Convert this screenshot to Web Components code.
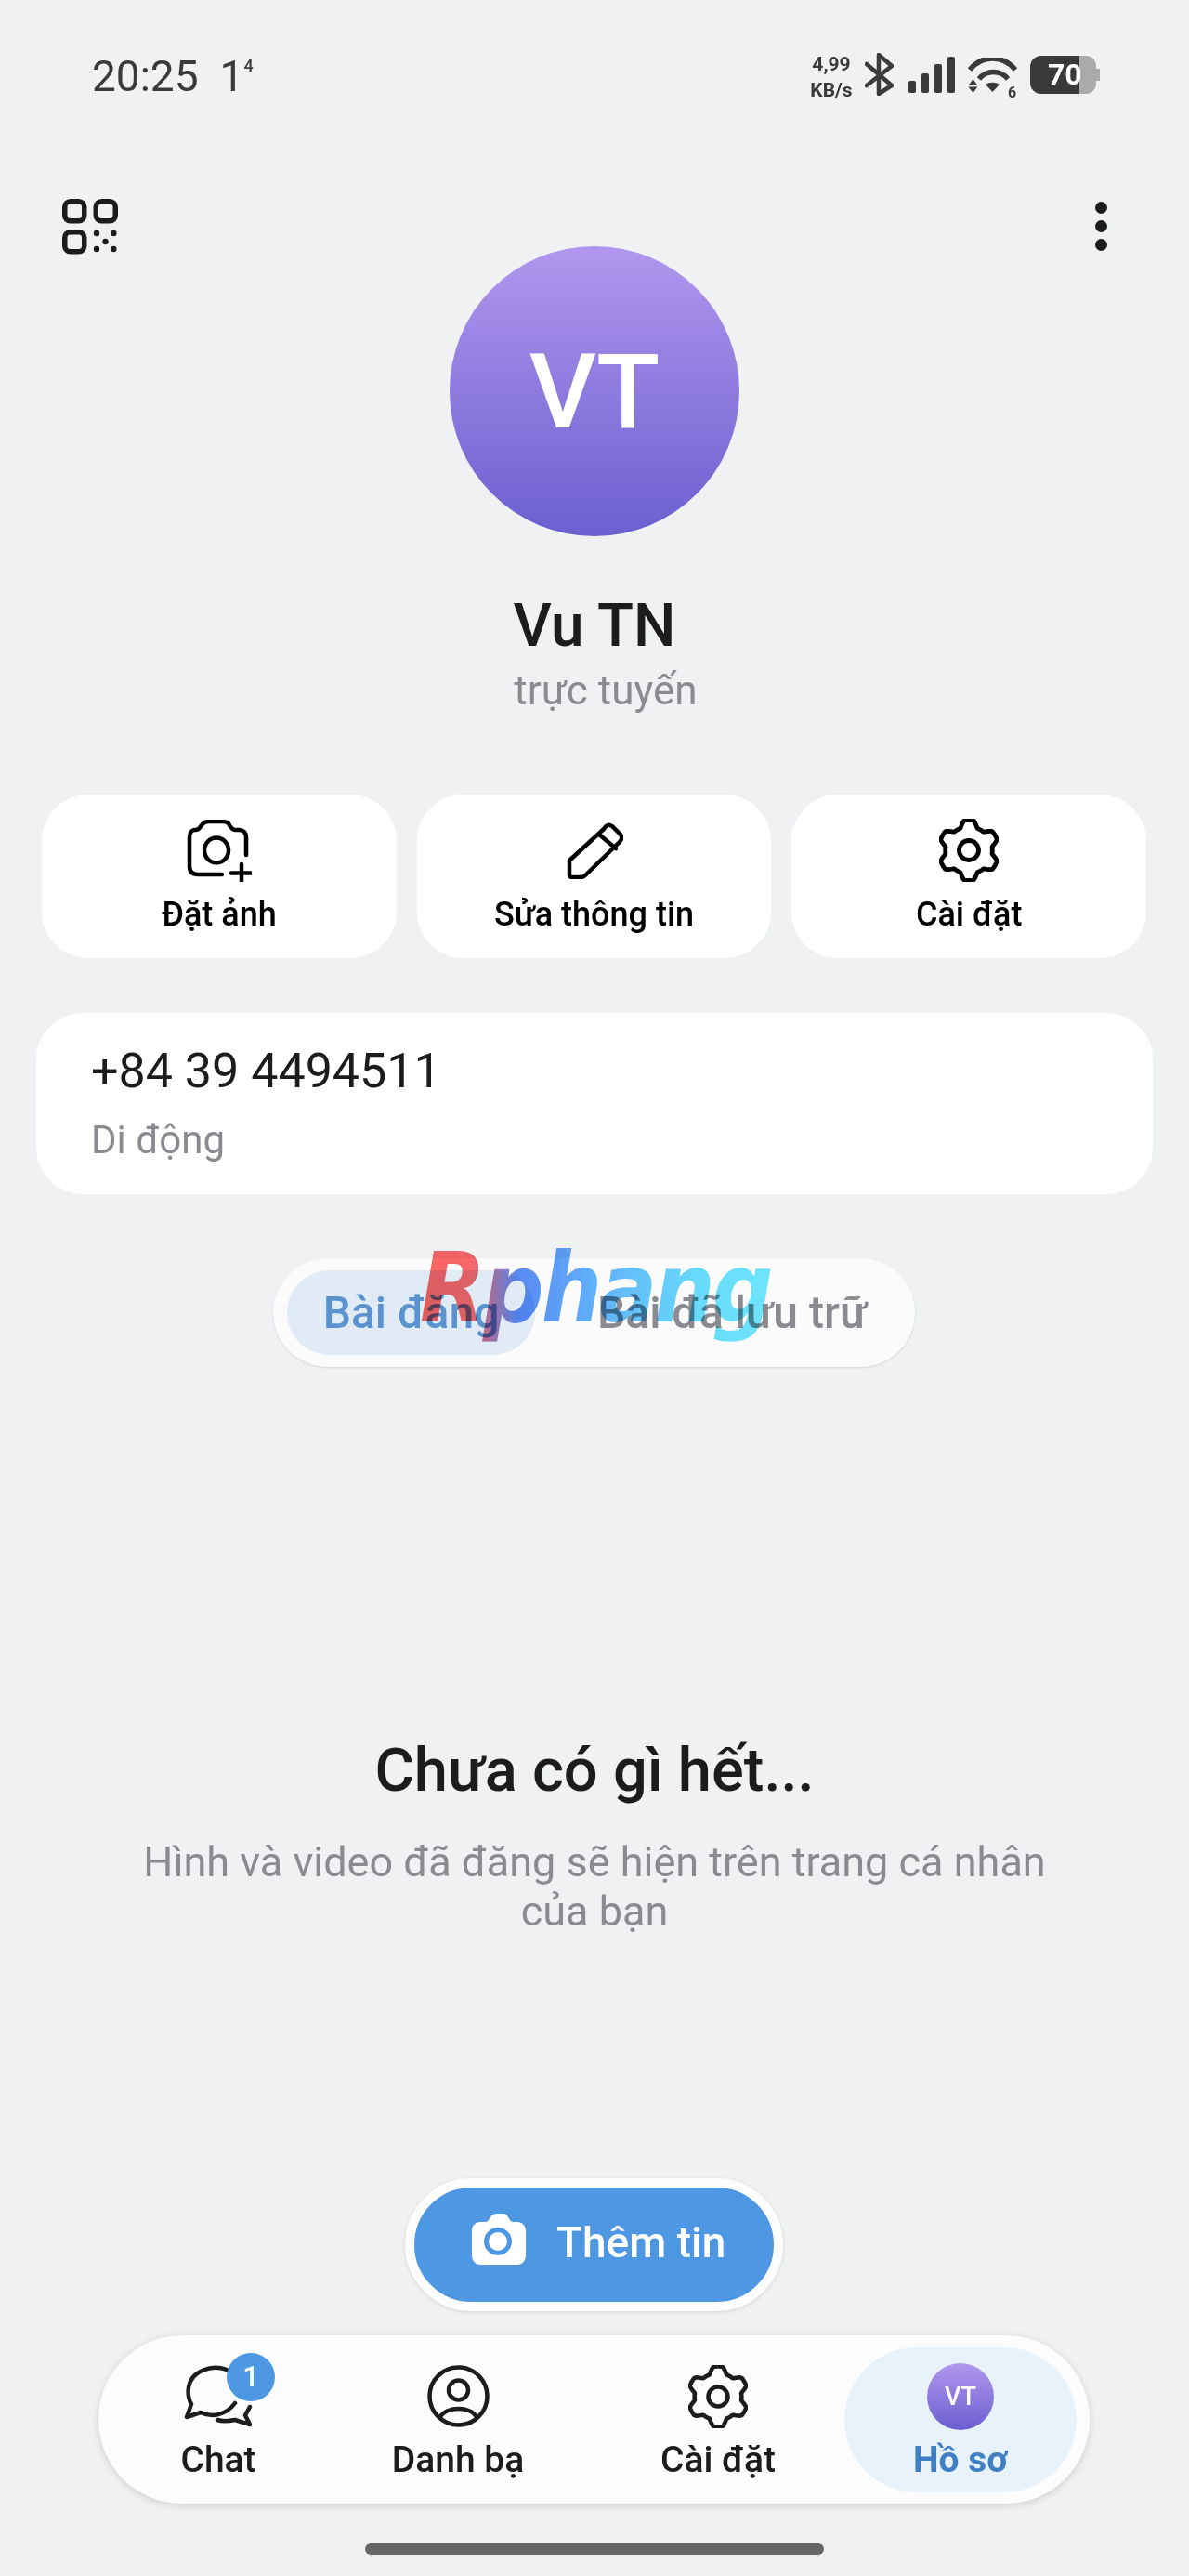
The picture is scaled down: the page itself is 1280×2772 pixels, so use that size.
<!DOCTYPE html>
<html lang="vi"><head><meta charset="utf-8"><title>Hồ sơ</title>
<style>
html,body{margin:0;padding:0;background:#f0f1f3}
body{font-family:Roboto,"Noto Sans",sans-serif;color:#1c1c1e}
</style></head><body>
<profile-screen>
  <status-bar></status-bar>
  <profile-head name="Vu TN" state="trực tuyến" initials="VT"></profile-head>
  <action-row></action-row>
  <phone-card number="+84 39 4494511" kind="Di động"></phone-card>
  <post-tabs></post-tabs>
  <empty-state></empty-state>
  <story-button></story-button>
  <bottom-nav></bottom-nav>
  <home-bar></home-bar>
</profile-screen>
<script>
const el=(name,html)=>customElements.define(name,class extends HTMLElement{
  constructor(){super();this.attachShadow({mode:'open'}).innerHTML=typeof html==='function'?html(this):html}
  connectedCallback(){if(typeof html==='function')this.shadowRoot.innerHTML=html(this)}
});
function gearPath(cx,cy,R,a){
  let d='';const n=180;
  for(let i=0;i<n;i++){const t=i/n*2*Math.PI;
    const c=Math.cos(6*(t-Math.PI/2));
    const s=Math.max(-1,Math.min(1,1.7*c));
    const r=R-a+a*s;
    d+=(i?'L':'M')+(cx+r*Math.cos(t)).toFixed(2)+' '+(cy+r*Math.sin(t)).toFixed(2);
  }
  return d+'Z';
}
const gear=(size,h,sw)=>`<svg width="${size}" height="${h}" viewBox="0 0 64 68" fill="none" stroke="currentColor" stroke-width="${sw}" stroke-linejoin="round"><path d="${gearPath(32,34,32.5,3.6)}"/><circle cx="32" cy="34" r="10.5"/></svg>`;

el('profile-screen',`<style>:host{display:flex;flex-direction:column;width:1280px;height:2772px;overflow:hidden;background:#f0f1f3}::slotted(*){flex:none}</style><slot></slot>`);

el('status-bar',`<style>
:host{display:flex;justify-content:space-between;align-items:flex-start;height:214px;padding:0 96px 0 99px;box-sizing:border-box;color:#3a3a3a}
.l{display:flex;align-items:flex-start;margin-top:60px;font-size:46px;line-height:45px;letter-spacing:0}
.one{margin-left:23px}.sup{font-size:18px;line-height:18px;margin-top:2px;font-weight:500}
.r{display:flex;align-items:flex-start;margin-top:57px;position:relative}
.net{font-size:21px;line-height:28px;font-weight:700;text-align:center;width:46px;margin-right:13px;margin-top:-2px;margin-left:-2px}
svg{display:block}
.bat{position:relative;width:75px;height:41px;margin:3px 0 0 14px}
.bat b{position:absolute;left:19px;top:2px;font-size:32px;line-height:37px;color:#fff;font-weight:700}
.wifi{position:relative;margin:5px 0 0 14px}
.wifi i{position:absolute;left:43px;top:30px;font:700 16px/16px Roboto;color:#3a3a3a}
</style>
<div class="l"><span>20:25</span><span class="one">1</span><span class="sup">4</span></div>
<div class="r">
<div class="net">4,99<br>KB/s</div>
<svg width="31" height="46" viewBox="0 0 31 46" fill="none" stroke="#3a3a3a" stroke-width="4.5" stroke-linecap="round" stroke-linejoin="round"><path d="M2 12 29 35 15 44V2L29 14 2 35"/></svg>
<svg style="margin:4px 0 0 16px" width="50" height="39" viewBox="0 0 50 39" fill="#3a3a3a"><rect x="0" y="26" width="8" height="13" rx="2"/><rect x="14" y="18" width="8" height="21" rx="2"/><rect x="28" y="8" width="8" height="31" rx="2"/><rect x="42" y="0" width="8" height="39" rx="2"/></svg>
<div class="wifi"><svg width="53" height="40" viewBox="0 0 53 40" fill="#3a3a3a"><path d="M2 13C15 -3 38 -3 51 13" fill="none" stroke="#3a3a3a" stroke-width="5.500"/><path d="M12 23C20 13 35 13 43 23" fill="none" stroke="#3a3a3a" stroke-width="5.500"/><path d="M19 29C23 26 30 26 34 29L26.500 37Z"/><path d="M5.500 23 10.500 30H.5ZM5.500 38 .5 31.500H10.500Z"/></svg><i>6</i></div>
<div class="bat"><svg width="75" height="41" viewBox="0 0 75 41"><path d="M12 0H60A11 11 0 0 1 71 11V14H75V27H71V30A11 11 0 0 1 60 41H12A12 12 0 0 1 0 29V12A12 12 0 0 1 12 0Z" fill="#aaaaaa"/><path d="M12 0H53V41H12A12 12 0 0 1 0 29V12A12 12 0 0 1 12 0Z" fill="#3a3a3a"/></svg><b>70</b></div>
</div>`);

el('profile-head',h=>`<style>
:host{display:block}
.top{display:grid;grid-template-columns:1fr 312px 1fr;padding:0 67px;align-items:start}
.av{margin:51px 0 0;width:312px;height:312px;border-radius:50%;background:linear-gradient(#b197ee,#6c5fd0);color:#fff;display:flex;align-items:center;justify-content:center;font-size:112px;font-weight:500;justify-self:center}
.dots{justify-self:end;display:flex;flex-direction:column;gap:7px;margin:3px 21px 0 0}
.dots i{width:13px;height:13px;border-radius:50%;background:#1c1c1e;display:block}
.n{text-align:center;font-size:64px;line-height:76px;font-weight:500;margin-top:59px;color:#1c1c1e}
.s{text-align:center;font-size:44px;line-height:50px;color:#8a8b90;margin-top:6px;padding-left:24px}
svg{display:block}
</style>
<div class="top">
<svg width="60" height="60" viewBox="0 0 60 60" fill="none" stroke="#1c1c1e" stroke-width="5.500"><rect x="2.750" y="2.750" width="21" height="21" rx="6"/><rect x="36.250" y="2.750" width="21" height="21" rx="6"/><rect x="2.750" y="35.750" width="21" height="21" rx="6"/><g fill="#1c1c1e" stroke="none"><circle cx="37" cy="37" r="3.200"/><circle cx="55.400" cy="37" r="3.200"/><circle cx="46.500" cy="46" r="3.200"/><circle cx="37" cy="54" r="3.200"/><circle cx="55.400" cy="54" r="3.200"/></g></svg>
<div class="av">${h.getAttribute('initials')||''}</div>
<div class="dots"><i></i><i></i><i></i></div>
</div>
<div class="n">${h.getAttribute('name')||''}</div>
<div class="s">${h.getAttribute('state')||''}</div>`);

el('action-tile',h=>`<style>
:host{display:flex;flex-direction:column;align-items:center;width:382px;height:176px;background:#fff;border-radius:50px;box-sizing:border-box;padding-top:24px;color:#000}
.i{height:72px;display:flex;align-items:center;justify-content:center}
.t{font-size:36px;line-height:42px;font-weight:500;margin-top:12px}
</style><div class="i"><slot></slot></div><div class="t">${h.getAttribute('label')||''}</div>`);

el('action-row',`<style>:host{display:flex;gap:22px;padding:0 46px 0 45px;margin-top:87px}svg{display:block}</style>
<action-tile label="Đặt ảnh"><svg width="70" height="67" viewBox="0 0 70 67" fill="none" stroke="#000" stroke-width="4.500" stroke-linecap="round" stroke-linejoin="round"><path d="M64 38V19C64 14 61 11 56 11H52C49 11 48 9 46 6 45 3 42 2 38 2H24C20 2 18 3 16 6 14 9 13 11 10 11H9C5 11 3 15 3 19V50C3 56 6 59 12 59H38"/><ellipse cx="32" cy="33" rx="13" ry="13.500"/><path d="M59 48V67M48 57.500H69" /></svg></action-tile>
<action-tile label="Sửa thông tin"><svg width="62" height="62" viewBox="0 0 62 62" fill="none" stroke="#000" stroke-width="4.500" stroke-linecap="round" stroke-linejoin="round"><path d="M4 42 41 8C44 3 47 3 50 5L59 14C61 17 60 20 58 22L21 58C20 59 18 60 16 60H7C5 60 4 59 4 57Z"/><path d="M36 14 54 29"/></svg></action-tile>
<action-tile label="Cài đặt">${gear(64,68,4.8)}</action-tile>`);

el('phone-card',h=>`<style>
:host{display:block;margin:59px 39px 0;height:195px;background:#fff;border-radius:50px;box-sizing:border-box;padding:33px 60px 0 59px}
.a{font-size:52px;line-height:60px;color:#1c1c1e}
.b{font-size:42px;line-height:50px;color:#8a8b90;margin-top:19px}
</style><div class="a">${h.getAttribute('number')||''}</div><div class="b">${h.getAttribute('kind')||''}</div>`);

el('brand-mark',`<style>
:host{position:absolute;left:158px;top:-13px;mix-blend-mode:multiply;pointer-events:none}
span{display:block;font:italic 700 92px/100px "DejaVu Sans",sans-serif;letter-spacing:-3px;white-space:nowrap;transform:scaleY(1.12);transform-origin:0 78%;background:linear-gradient(90deg,#fb6464 0%,#fb6a6a 15%,#5a8cf6 28%,#62b4fb 50%,#6adfff 80%,#70e8ff 100%);-webkit-background-clip:text;background-clip:text;color:transparent}
</style><span>Rphang</span>`);

el('post-tabs',`<style>
:host{display:block;position:relative;width:691px;height:117px;margin:69px 0 0 294px;background:#fbfbfc;border-radius:59px;box-sizing:border-box;box-shadow:0 1px 2px rgba(0,0,0,.12);font-size:48px;line-height:56px;font-weight:500}
.row{display:flex;padding:13px 0 0 15px}
.a{width:267px;height:91px;border-radius:46px;background:#e1ebf5;color:#5a93d0;display:flex;align-items:center;justify-content:center}
.b{color:#8a8b90;margin-left:67px;margin-top:18px}
</style><div class="row"><div class="a">Bài đăng</div><div class="b">Bài đã lưu trữ</div></div><brand-mark></brand-mark>`);

el('empty-state',`<style>
:host{display:block;text-align:center;margin-top:396px;height:477px}
.t{font-size:65px;line-height:76px;font-weight:500;color:#1c1c1e}
.s{font-size:45px;line-height:53px;color:#8a8b90;margin-top:34px;padding:0 140px}
</style><div class="t">Chưa có gì hết...</div><div class="s">Hình và video đã đăng sẽ hiện trên trang cá nhân của bạn</div>`);

el('story-button',`<style>
:host{display:flex;align-items:center;box-sizing:border-box;width:407px;height:143px;margin:0 0 0 436px;border:10px solid #fdfdfe;border-radius:72px;background:#4d97e3;color:#fff;box-shadow:0 1px 4px rgba(0,0,0,.12);padding:0 0 6px 62px;font-size:46px;font-weight:500}
span{margin-left:33px}svg{display:block;margin-top:-6px}
</style><svg width="58" height="55" viewBox="0 0 58 55"><path d="M9 9H14C17 9 18 7 20 4 21 1 24 0 27 0H33C36 0 38 1 39 4 41 7 42 9 45 9H49C54 9 58 13 58 18V45C58 51 54 55 49 55H9C4 55 0 51 0 45V18C0 13 4 9 9 9Z" fill="#fff"/><circle cx="28" cy="30" r="12.500" fill="none" stroke="#4d97e3" stroke-width="5"/></svg><span>Thêm tin</span>`);

el('nav-item',h=>`<style>
:host{position:relative;display:flex;flex-direction:column;align-items:center;box-sizing:border-box;height:156px;color:#1c1c1e;width:var(--w,200px)}
.i{height:72px;margin-top:17px;display:flex;align-items:center;justify-content:center}
.t{font-size:39px;line-height:46px;margin-top:9px;font-weight:500;white-space:nowrap}
:host([active]){background:#e8f2fb;border-radius:78px;color:#3f7fc4}
:host([active]) .t{font-weight:700}
</style><div class="i"><slot></slot></div><div class="t">${h.getAttribute('label')||''}</div>`);

el('bottom-nav',`<style>
:host{display:flex;align-items:center;box-sizing:border-box;width:1067px;height:181px;margin:26px 0 0 106px;background:#fcfcfc;border-radius:90px;box-shadow:0 2px 8px rgba(0,0,0,.14);padding:0 14px 0 0}
svg{display:block}
.badge{position:absolute;left:138px;top:6px;width:52px;height:52px;border-radius:50%;background:#4d97e3;color:#fff;font-size:31px;font-weight:500;display:flex;align-items:center;justify-content:center}
.mini{width:72px;height:72px;border-radius:50%;background:linear-gradient(#b197ee,#6c5fd0);color:#fff;font-size:27px;font-weight:500;display:flex;align-items:center;justify-content:center}
</style>
<nav-item label="Chat" style="--w:258px"><svg width="75" height="67" viewBox="0 0 75 67" fill="none" stroke="#1c1c1e" stroke-width="4.500" stroke-linecap="round" stroke-linejoin="round"><path d="M46 5C30-1 8 6 5 24 4 31 5 37 8 42L3 56 18 51C30 57 45 54 55 41"/><path d="M36 59C42 61 50 60 55 59L71 64 66 54 71 45"/></svg><span class="badge">1</span></nav-item>
<nav-item label="Danh bạ" style="--w:258px"><svg width="67" height="67" viewBox="0 0 67 67" fill="none" stroke="#1c1c1e" stroke-width="4.500" stroke-linecap="round"><circle cx="33.500" cy="33.500" r="31"/><circle cx="33.500" cy="27" r="10.500"/><path d="M14 56C20 44 47 44 53 56"/></svg></nav-item>
<nav-item label="Cài đặt" style="--w:290px;margin-left:6px">${gear(64,68,4.6)}</nav-item>
<nav-item label="Hồ sơ" active style="--w:250px;margin-left:-9px"><div class="mini">VT</div></nav-item>`);

el('home-bar',`<style>:host{display:block;width:494px;height:12px;margin:43px 0 0 393px;border-radius:6px;background:#666}</style>`);
</script>
</body></html>
